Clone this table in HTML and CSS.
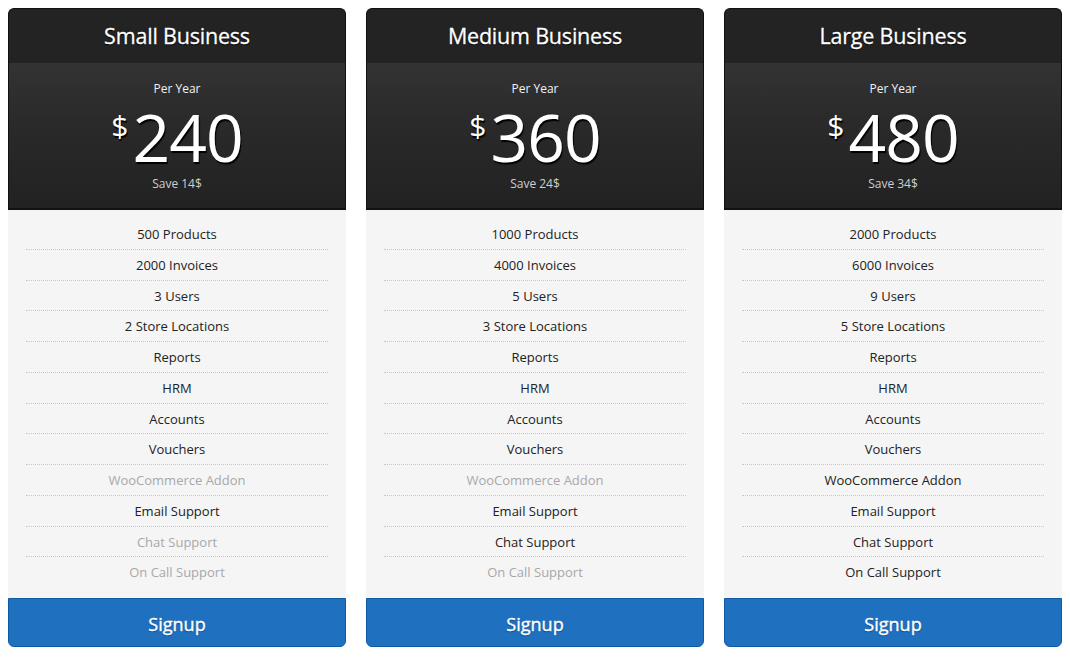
FILE: index.html
```html
<!DOCTYPE html>
<html>
<head>
<meta charset="utf-8">
<link rel="stylesheet" href="styles.css">
</head>
<body>
<div class="plans">
  <div class="plan">
    <div class="plan-title">Small Business</div>
    <div class="plan-price">
      <div class="period">Per Year</div>
      <div class="amount"><span class="cur">$</span><span class="num">240</span></div>
      <div class="save">Save 14$</div>
    </div>
    <ul class="features">
      <li>500 Products</li>
      <li>2000 Invoices</li>
      <li>3 Users</li>
      <li>2 Store Locations</li>
      <li>Reports</li>
      <li>HRM</li>
      <li>Accounts</li>
      <li>Vouchers</li>
      <li class="off">WooCommerce Addon</li>
      <li>Email Support</li>
      <li class="off">Chat Support</li>
      <li class="off">On Call Support</li>
    </ul>
    <div class="signup">Signup</div>
  </div>
  <div class="plan">
    <div class="plan-title">Medium Business</div>
    <div class="plan-price">
      <div class="period">Per Year</div>
      <div class="amount"><span class="cur">$</span><span class="num">360</span></div>
      <div class="save">Save 24$</div>
    </div>
    <ul class="features">
      <li>1000 Products</li>
      <li>4000 Invoices</li>
      <li>5 Users</li>
      <li>3 Store Locations</li>
      <li>Reports</li>
      <li>HRM</li>
      <li>Accounts</li>
      <li>Vouchers</li>
      <li class="off">WooCommerce Addon</li>
      <li>Email Support</li>
      <li>Chat Support</li>
      <li class="off">On Call Support</li>
    </ul>
    <div class="signup">Signup</div>
  </div>
  <div class="plan">
    <div class="plan-title">Large Business</div>
    <div class="plan-price">
      <div class="period">Per Year</div>
      <div class="amount"><span class="cur">$</span><span class="num">480</span></div>
      <div class="save">Save 34$</div>
    </div>
    <ul class="features">
      <li>2000 Products</li>
      <li>6000 Invoices</li>
      <li>9 Users</li>
      <li>5 Store Locations</li>
      <li>Reports</li>
      <li>HRM</li>
      <li>Accounts</li>
      <li>Vouchers</li>
      <li>WooCommerce Addon</li>
      <li>Email Support</li>
      <li>Chat Support</li>
      <li>On Call Support</li>
    </ul>
    <div class="signup">Signup</div>
  </div>
</div>
</body>
</html>
```
FILE: styles.css
```css
* { box-sizing: border-box; }
html, body { margin: 0; padding: 0; background: #fff; }
body {
  font-family: "Open Sans", "Noto Sans", sans-serif;
  padding: 8px 8px 0 8px;
}
.plans {
  display: flex;
  gap: 20px;
}
.plan {
  width: 338px;
  display: flex;
  flex-direction: column;
}
.plan-title {
  height: 55px;
  background: #232323;
  border: 1px solid #111;
  border-bottom: none;
  border-radius: 6px 6px 0 0;
  color: #fff;
  font-size: 21.5px;
  line-height: 53px;
  text-align: center;
  text-shadow: 0 1px 1px #000, 0 0 1px #000;
  -webkit-text-stroke: 0.3px #fff;
  letter-spacing: -0.2px;
}
.plan-price {
  height: 147px;
  background: linear-gradient(#333 0%, #2a2a2a 40%, #222 100%);
  border-left: 1px solid #111;
  border-right: 1px solid #111;
  border-bottom: 2px solid #111;
  color: #fff;
  text-align: center;
  padding-top: 18px;
}
.period {
  font-size: 12px;
  line-height: 16px;
  color: #f2f2f2;
}
.amount {
  height: 79px;
  display: flex;
  justify-content: center;
  align-items: flex-start;
  text-shadow: 1px 2px 1px #000;
}
.cur {
  font-size: 30px;
  line-height: 30px;
  margin-top: 14px;
  margin-right: 4px;
}
.num {
  font-size: 66px;
  line-height: 79px;
  letter-spacing: -1px;
}
.save {
  font-size: 12px;
  line-height: 16px;
  color: #cfcfcf;
}
.features {
  list-style: none;
  margin: 0;
  padding: 9px 18px 10px;
  background: #f5f5f5;
}
.features li {
  height: 30.75px;
  line-height: 30px;
  text-align: center;
  font-size: 13px;
  color: #222;
  border-bottom: 1px dotted #c8c8c8;
}
.features li:last-child { border-bottom: none; }
.features li.off { color: #a8a8a8; }
.signup {
  height: 49px;
  background: #1f70bf;
  border: 1px solid #0f5aa5;
  border-radius: 0 0 6px 6px;
  color: #fff;
  text-align: center;
  font-size: 18px;
  line-height: 50px;
  text-shadow: 0 1px 1px #0a3d73;
  -webkit-text-stroke: 0.4px #fff;
}
```
